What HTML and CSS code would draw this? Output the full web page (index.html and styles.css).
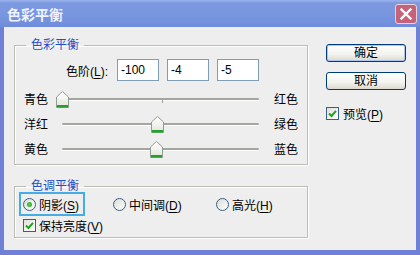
FILE: index.html
```html
<!DOCTYPE html>
<html>
<head>
    <meta charset="utf-8">
    <title>色彩平衡</title>
    <link rel="stylesheet" href="styles.css">
</head>
<body>
    <div class="window">
        <div class="titlebar">
            <span class="title">色彩平衡</span>
            <span class="close">
                <svg width="12" height="12" viewBox="0 0 12 12"><path d="M1.5 1.5L10.5 10.5M10.5 1.5L1.5 10.5" stroke="#fff" stroke-width="2.4" stroke-linecap="square"/></svg>
            </span>
        </div>
        <div class="body">
            <div class="main">
                <fieldset class="group group-balance">
                    <legend>色彩平衡</legend>
                    <div class="levels">
                        <label class="levels-label">色阶(<u>L</u>):</label>
                        <input class="num" type="text" value="-100">
                        <input class="num" type="text" value="-4">
                        <input class="num" type="text" value="-5">
                    </div>
                    <div class="sliders">
                        <div class="slider-row">
                            <span class="lbl-l">青色</span>
                            <div class="track"><i class="tick"></i><span class="thumb" style="left: 0%"><svg width="13" height="17" viewBox="0 0 13 17"><defs><linearGradient id="tg" x1="0" y1="0" x2="0" y2="1"><stop offset="0" stop-color="#ffffff"/><stop offset="1" stop-color="#e4e4dc"/></linearGradient></defs><path d="M0.5 6L6.5 0.5L12.5 6V16.5H0.5Z" fill="url(#tg)" stroke="#8d9f93"/><rect x="1" y="14" width="11" height="2.5" fill="#22a22a"/></svg></span></div>
                            <span class="lbl-r">红色</span>
                        </div>
                        <div class="slider-row">
                            <span class="lbl-l">洋红</span>
                            <div class="track"><i class="tick"></i><span class="thumb" style="left: 48%"><svg width="13" height="17" viewBox="0 0 13 17"><path d="M0.5 6L6.5 0.5L12.5 6V16.5H0.5Z" fill="url(#tg)" stroke="#8d9f93"/><rect x="1" y="14" width="11" height="2.5" fill="#22a22a"/></svg></span></div>
                            <span class="lbl-r">绿色</span>
                        </div>
                        <div class="slider-row">
                            <span class="lbl-l">黄色</span>
                            <div class="track"><i class="tick"></i><span class="thumb" style="left: 47.5%"><svg width="13" height="17" viewBox="0 0 13 17"><path d="M0.5 6L6.5 0.5L12.5 6V16.5H0.5Z" fill="url(#tg)" stroke="#8d9f93"/><rect x="1" y="14" width="11" height="2.5" fill="#22a22a"/></svg></span></div>
                            <span class="lbl-r">蓝色</span>
                        </div>
                    </div>
                </fieldset>
                <fieldset class="group group-tone">
                    <legend>色调平衡</legend>
                    <div class="tones">
                        <label class="opt focus"><span class="radio on"></span><span>阴影(<u>S</u>)</span></label>
                        <label class="opt mid"><span class="radio"></span><span>中间调(<u>D</u>)</span></label>
                        <label class="opt"><span class="radio"></span><span>高光(<u>H</u>)</span></label>
                    </div>
                    <label class="opt keep"><span class="check"><svg width="11" height="11" viewBox="0 0 11 11"><path d="M2 5.5L4.5 8L9 2.8" fill="none" stroke="#21a121" stroke-width="2"/></svg></span><span>保持亮度(<u>V</u>)</span></label>
                </fieldset>
            </div>
            <div class="side">
                <button class="btn default">确定</button>
                <button class="btn">取消</button>
                <label class="opt preview"><span class="check"><svg width="11" height="11" viewBox="0 0 11 11"><path d="M2 5.5L4.5 8L9 2.8" fill="none" stroke="#21a121" stroke-width="2"/></svg></span><span>预览(<u>P</u>)</span></label>
            </div>
        </div>
    </div>
</body>
</html>
```

FILE: styles.css
```css
* { box-sizing: border-box; }
body { margin: 0; background: #eeeeee; font-family: "Liberation Sans", "Noto Sans CJK SC", sans-serif; font-size: 12px; color: #000; }
u { text-underline-offset: 2px; }

.window { width: 420px; height: 255px; display: flex; flex-direction: column; }
.titlebar { height: 27px; display: flex; align-items: center; justify-content: space-between; padding: 0 3px 0 7px; background: linear-gradient(#9ab2ec 0, #7c98e0 12%, #7896df 55%, #6f8cdb 100%); }
.title { color: #eef2fb; font-size: 14px; font-weight: 700; line-height: 16px; font-family: "Noto Sans CJK SC", sans-serif; }
.close { width: 22px; height: 20px; display: flex; align-items: center; justify-content: center; background: #c4637a; border: 1px solid #ead2da; border-radius: 3px; }

.body { flex: 1; display: flex; padding: 11px 10px 0 10px; background: #eeeeee; border: 4px solid #6f80d6; border-top: 0; border-bottom-width: 5px; }
.main { width: 294px; }
.side { width: 80px; margin-left: 18px; margin-top: 6px; display: flex; flex-direction: column; }

.group { margin: 0; padding: 0 0 3px 0; min-width: 0; border: 1px solid #bdbdb5; box-shadow: inset 1px 1px 0 #fff, 1px 1px 0 #fff; }
.group legend { margin-left: 11px; padding: 0 5px; line-height: 14px; color: #1f4fcc; }
.group-tone { margin-top: 14px; padding-bottom: 5px; }

.levels { display: flex; align-items: center; margin-top: 7px; height: 22px; }
.levels-label { width: 93px; margin-right: 9px; text-align: right; }
.num { width: 42px; height: 22px; margin: 0 8px 0 0; padding: 0 3px; border: 1px solid #7f9db9; background: #fff; font: 12px "Liberation Sans", sans-serif; color: #000; outline: none; }

.sliders { margin-top: 5px; }
.slider-row { display: flex; align-items: center; height: 25px; padding-left: 9px; }
.lbl-l { width: 38px; }
.lbl-r { margin-left: 15px; }
.track { position: relative; width: 197px; height: 2px; background: #a5a5a0; border-radius: 1px; box-shadow: 0 1px 0 #fff; }
.tick { position: absolute; left: 100px; top: 2px; width: 1px; height: 3px; background: #a5a5a0; }
.thumb { position: absolute; top: -7px; width: 13px; height: 17px; margin-left: -6px; display: block; }
.thumb svg { display: block; }

.tones { display: flex; align-items: center; height: 24px; margin-top: -1px; padding-left: 4px; }
.opt { display: flex; align-items: center; gap: 3px; white-space: nowrap; }
.opt.focus { width: 66px; height: 24px; padding-left: 2px; border: 2px solid #46ade4; }
.opt.mid { width: 103px; margin-left: 28px; }
.keep { margin-top: 3px; height: 13px; padding-left: 8px; }

.radio { width: 13px; height: 13px; border-radius: 50%; border: 1px solid #36608a; background: linear-gradient(135deg, #dcdcd4, #ffffff); display: flex; align-items: center; justify-content: center; }
.radio.on::after { content: ''; width: 5px; height: 5px; border-radius: 50%; background: radial-gradient(#5ed65e, #1a9a1a); }
.check { width: 13px; height: 13px; border: 1px solid #36608a; background: linear-gradient(135deg, #e0e0d8, #ffffff); display: flex; align-items: center; justify-content: center; }
.check svg { display: block; }

.btn { width: 80px; height: 18px; padding: 0; border: 1px solid #003c74; border-radius: 3px; background: linear-gradient(#ffffff, #f2f2ee 60%, #dcd8cc); font: 12px "Liberation Sans", "Noto Sans CJK SC", sans-serif; color: #000; line-height: 16px; }
.btn.default { box-shadow: inset 0 0 0 1px #aac6f0; }
.btn + .btn { margin-top: 10px; }
.preview { margin-top: 17px; height: 13px; gap: 4px; }
```
